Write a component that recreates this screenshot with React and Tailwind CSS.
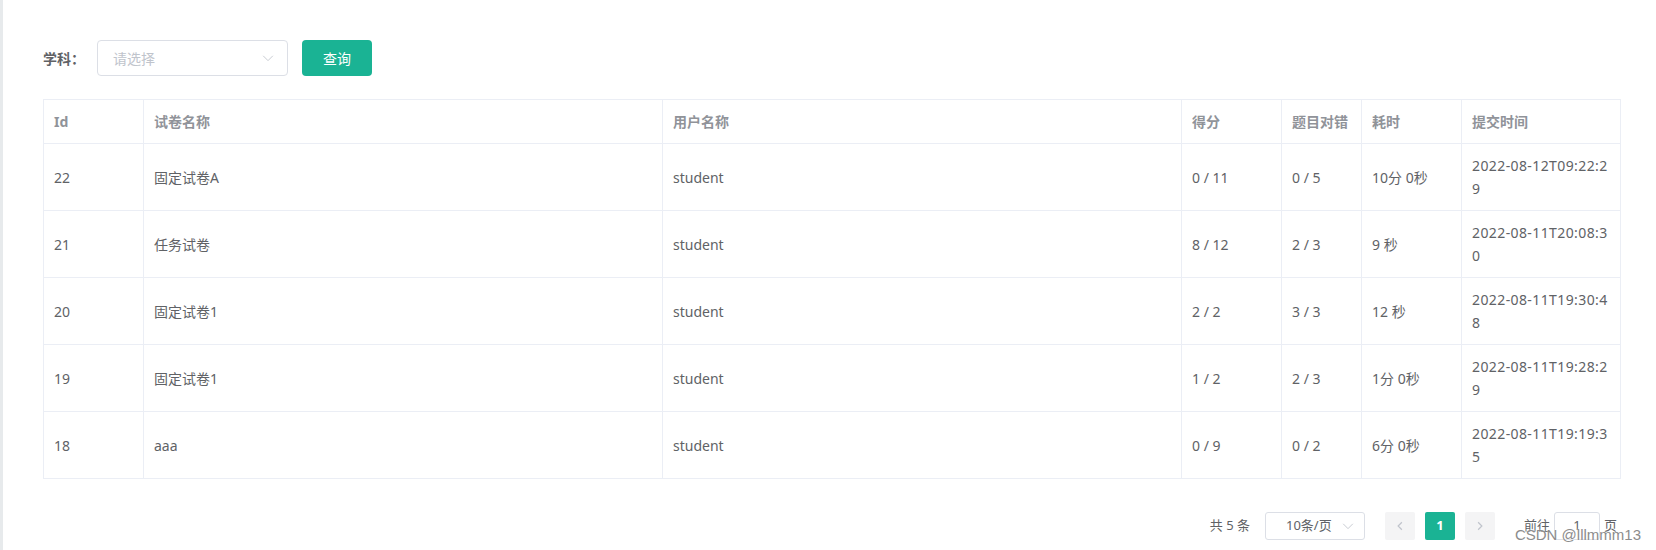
/**
 * ExamRecords — 考试记录列表 (filter form + bordered table + pagination).
 */

const FONT = "font-['Noto_Sans','Noto_Sans_CJK_SC',sans-serif]";

const COLUMNS = [
  { key: 'id', label: 'Id', width: 100 },
  { key: 'paper', label: '试卷名称', width: 519 },
  { key: 'user', label: '用户名称', width: 519 },
  { key: 'score', label: '得分', width: 100 },
  { key: 'right', label: '题目对错', width: 80 },
  { key: 'time', label: '耗时', width: 100 },
  { key: 'submit', label: '提交时间', width: 159 },
];

const ROWS = [
  { id: 22, paper: '固定试卷A', user: 'student', score: '0 / 11', right: '0 / 5', time: '10分 0秒', submit: '2022-08-12T09:22:29' },
  { id: 21, paper: '任务试卷', user: 'student', score: '8 / 12', right: '2 / 3', time: '9 秒', submit: '2022-08-11T20:08:30' },
  { id: 20, paper: '固定试卷1', user: 'student', score: '2 / 2', right: '3 / 3', time: '12 秒', submit: '2022-08-11T19:30:48' },
  { id: 19, paper: '固定试卷1', user: 'student', score: '1 / 2', right: '2 / 3', time: '1分 0秒', submit: '2022-08-11T19:28:29' },
  { id: 18, paper: 'aaa', user: 'student', score: '0 / 9', right: '0 / 2', time: '6分 0秒', submit: '2022-08-11T19:19:35' },
];

export default function App() {
  return (
    <div className={`relative flex h-[550px] w-[1656px] overflow-hidden bg-white ${FONT}`}>
      {/* left gutter */}
      <div className="w-[3px] shrink-0 bg-[#e7eaec]" />

      <div className="flex-1 pl-[40px] pt-[40px]">
        {/* Filter form */}
        <div className="flex h-[36px] items-center">
          <label className="w-[54px] text-[14px] font-bold text-[#606266]">学科：</label>
          <div className="flex h-[36px] w-[191px] items-center justify-between rounded-[4px] border border-[#dcdfe6] pl-[15px] pr-[12px]">
            <span className="text-[14px] text-[#c0c4cc]">请选择</span>
            <ChevronDown className="text-[#c0c4cc]" />
          </div>
          <button className="ml-[14px] h-[36px] w-[70px] rounded-[4px] bg-[#1ab394] text-[14px] text-white">
            查询
          </button>
        </div>

        {/* Table */}
        <table className="mt-[23px] w-[1577px] table-fixed border-collapse border-l border-t border-[#ebeef5] text-[14px]">
          <colgroup>
            {COLUMNS.map((c) => (
              <col key={c.key} style={{ width: c.width }} />
            ))}
          </colgroup>
          <thead>
            <tr>
              {COLUMNS.map((c) => (
                <th
                  key={c.key}
                  className="border-b border-r border-[#ebeef5] px-[10px] py-[10px] text-left align-middle font-bold leading-[23px] text-[#909399]"
                >
                  {c.label}
                </th>
              ))}
            </tr>
          </thead>
          <tbody>
            {ROWS.map((row) => (
              <tr key={row.id}>
                {COLUMNS.map((c) => (
                  <td
                    key={c.key}
                    className={`break-all border-b border-r border-[#ebeef5] px-[10px] py-[10px] align-middle leading-[23px] text-[#606266] ${
                      c.key === 'submit' ? 'tracking-[0.4px]' : ''
                    }`}
                  >
                    {row[c.key]}
                  </td>
                ))}
              </tr>
            ))}
          </tbody>
        </table>

        {/* Pagination */}
        <div className="mt-[33px] flex w-[1577px] items-center justify-end pr-[3px] text-[13px] text-[#606266]">
          <span className="mr-[15px]">共 5 条</span>
          <div className="flex h-[28px] w-[100px] items-center justify-between rounded-[3px] border border-[#dcdfe6] pl-[20px] pr-[9px]">
            <span>10条/页</span>
            <ChevronDown className="h-[12px] w-[12px] text-[#c0c4cc]" />
          </div>
          <div className="ml-[20px] flex items-center gap-[10px]">
            <span className="flex h-[28px] w-[30px] items-center justify-center rounded-[2px] bg-[#f4f4f5] text-[#c0c4cc]">
              <ChevronLeft />
            </span>
            <span className="flex h-[28px] w-[30px] items-center justify-center rounded-[2px] bg-[#1ab394] font-bold text-white">
              1
            </span>
            <span className="flex h-[28px] w-[30px] items-center justify-center rounded-[2px] bg-[#f4f4f5] text-[#c0c4cc]">
              <ChevronRight />
            </span>
          </div>
          <span className="ml-[29px]">前往</span>
          <div className="ml-[4px] flex h-[28px] w-[46px] items-center justify-center rounded-[3px] border border-[#dcdfe6]">
            1
          </div>
          <span className="ml-[4px]">页</span>
        </div>
      </div>

      {/* CSDN watermark */}
      <span className="absolute bottom-[8px] right-[15px] text-[15px] leading-none text-[#8c8c8c] [text-shadow:0_0_2px_#fff] font-['Liberation_Sans',sans-serif]">
        CSDN @lllmmm13
      </span>
    </div>
  );
}

// --- Icons ---

function ChevronDown({ className = 'h-[14px] w-[14px]' }) {
  return (
    <svg viewBox="0 0 16 16" className={`h-[14px] w-[14px] ${className}`} fill="none" stroke="currentColor" strokeWidth="1">
      <path d="M2.5 5.5 L8 11 L13.5 5.5" />
    </svg>
  );
}

function ChevronLeft() {
  return (
    <svg viewBox="0 0 16 16" className="h-[12px] w-[12px]" fill="none" stroke="currentColor" strokeWidth="1.6">
      <path d="M10.5 3 L5.5 8 L10.5 13" />
    </svg>
  );
}

function ChevronRight() {
  return (
    <svg viewBox="0 0 16 16" className="h-[12px] w-[12px]" fill="none" stroke="currentColor" strokeWidth="1.6">
      <path d="M5.5 3 L10.5 8 L5.5 13" />
    </svg>
  );
}
